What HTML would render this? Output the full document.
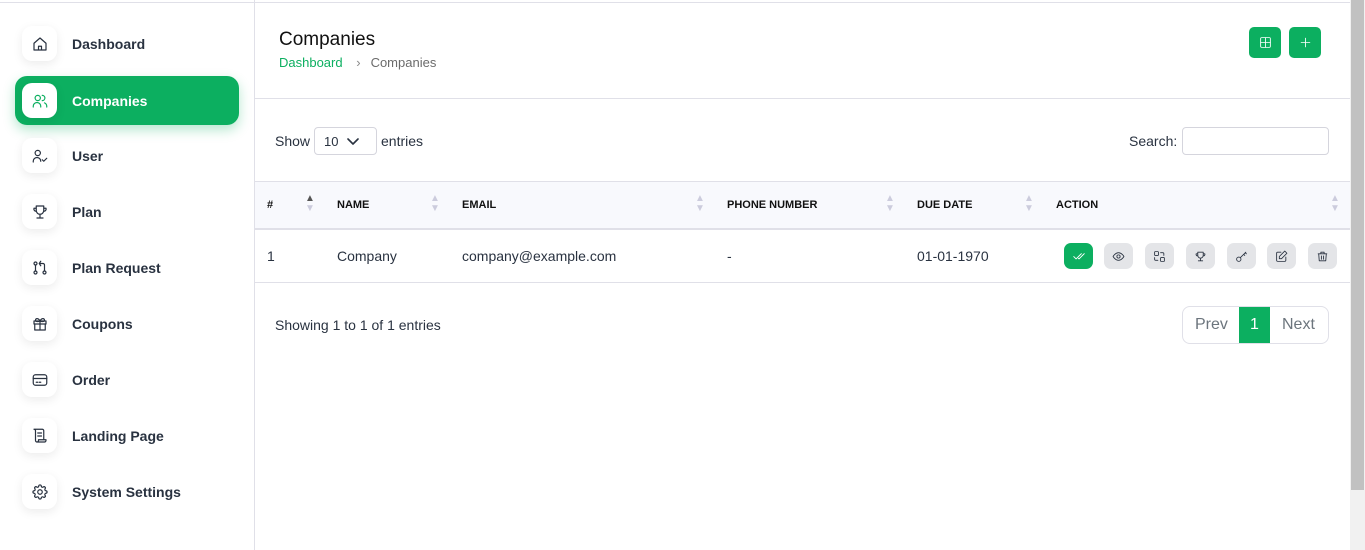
<!DOCTYPE html>
<html><head><style>
*{box-sizing:border-box;margin:0;padding:0}
body{width:1365px;height:550px;overflow:hidden;background:#fff;font-family:"Liberation Sans",sans-serif;position:relative;color:#293240}
.top{position:absolute;left:0;top:0;width:1350px;height:3px;border-bottom:1px solid #e0e0e8}
.side{position:absolute;left:0;top:0;width:255px;height:550px;border-right:1px solid #e0e0e8}
.item{position:absolute;left:15px;width:224px;height:49px;border-radius:12px;display:flex;align-items:center;font-size:14px;font-weight:bold;color:#293240}
.item .ic{width:35px;height:35px;border-radius:10px;background:#fff;box-shadow:0 3px 10px rgba(0,0,0,.08);margin-left:7px;margin-right:15px;display:flex;align-items:center;justify-content:center}
.item.act{background:#0caf60;color:#fff;box-shadow:0 5px 12px rgba(12,175,96,.3)}
svg{fill:none;stroke-width:1.6;stroke-linecap:round;stroke-linejoin:round}
.sb{position:absolute;left:1350px;top:0;width:15px;height:550px;background:#f1f1f1}
.sb div{position:absolute;left:1px;top:0;width:13px;height:490px;background:#c1c1c1}
.abs{position:absolute}
.gbtn{position:absolute;top:27px;width:32px;height:31px;background:#0caf60;border-radius:5px;display:flex;align-items:center;justify-content:center}
.th{position:absolute;top:199px;font-size:11px;font-weight:bold;color:#111}
.arr{position:absolute;top:194px;font-size:10px;line-height:10px;color:#ccd}
.td{position:absolute;top:248px;font-size:14px;color:#293240}
.ab{position:absolute;top:243px;width:29px;height:26px;border-radius:7px;background:#e4e5e8;display:flex;align-items:center;justify-content:center}
</style></head><body>
<div class="top"></div>
<div class="side">
<div class="item" style="top:19px"><div class="ic"><svg width="18" height="18" viewBox="0 0 24 24" stroke="#293240"><path d="M4 11l8-7 8 7v9H4z M10 20v-5h4v5"/></svg></div>Dashboard</div>
<div class="item act" style="top:76px"><div class="ic"><svg width="18" height="18" viewBox="0 0 24 24" stroke="#0caf60"><circle cx="9" cy="8" r="3.5"/><path d="M3 20v-1a5 5 0 0 1 10 0v1M15 4.5a3.5 3.5 0 0 1 0 7M21 20v-1a5 5 0 0 0-3-4.5"/></svg></div>Companies</div>
<div class="item" style="top:131px"><div class="ic"><svg width="18" height="18" viewBox="0 0 24 24" stroke="#293240"><circle cx="9" cy="8" r="3.5"/><path d="M3 20v-1a5 5 0 0 1 10 0M15 17l2 2 4-4"/></svg></div>User</div>
<div class="item" style="top:187px"><div class="ic"><svg width="18" height="18" viewBox="0 0 24 24" stroke="#293240"><path d="M8 20h8M12 15v5M7 4h10v6a5 5 0 0 1-10 0zM7 7H4a3 3 0 0 0 3 4M17 7h3a3 3 0 0 1-3 4"/></svg></div>Plan</div>
<div class="item" style="top:243px"><div class="ic"><svg width="18" height="18" viewBox="0 0 24 24" stroke="#293240"><circle cx="6" cy="18" r="2"/><circle cx="6" cy="6" r="2"/><circle cx="18" cy="18" r="2"/><path d="M6 8v8M11 6h5a2 2 0 0 1 2 2v8M13 3l-2 3 2 3"/></svg></div>Plan Request</div>
<div class="item" style="top:299px"><div class="ic"><svg width="18" height="18" viewBox="0 0 24 24" stroke="#293240"><rect x="4" y="8" width="16" height="4"/><path d="M5 12v8h14v-8M12 8v12M12 8c-2-4-6-4-6-1s6 1 6 1c2-4 6-4 6-1s-6 1-6 1"/></svg></div>Coupons</div>
<div class="item" style="top:355px"><div class="ic"><svg width="18" height="18" viewBox="0 0 24 24" stroke="#293240"><rect x="3" y="5" width="18" height="14" rx="3"/><path d="M3 10h18M7 15h2M11 15h2"/></svg></div>Order</div>
<div class="item" style="top:411px"><div class="ic"><svg width="18" height="18" viewBox="0 0 24 24" stroke="#293240"><path d="M8 20h10a2 2 0 0 0 2-2v-1H10v1a2 2 0 0 1-4 0V5a2 2 0 0 0-2-2h11a2 2 0 0 1 2 2v12M9 8h5M9 12h5"/></svg></div>Landing Page</div>
<div class="item" style="top:467px"><div class="ic"><svg width="18" height="18" viewBox="0 0 24 24" stroke="#293240"><circle cx="12" cy="12" r="3"/><path d="M10.3 4.3a1.7 1.7 0 0 1 3.4 0 1.7 1.7 0 0 0 2.6 1.1 1.7 1.7 0 0 1 2.4 2.4 1.7 1.7 0 0 0 1 2.5 1.7 1.7 0 0 1 0 3.4 1.7 1.7 0 0 0-1 2.6 1.7 1.7 0 0 1-2.4 2.4 1.7 1.7 0 0 0-2.6 1 1.7 1.7 0 0 1-3.4 0 1.7 1.7 0 0 0-2.6-1 1.7 1.7 0 0 1-2.4-2.4 1.7 1.7 0 0 0-1-2.6 1.7 1.7 0 0 1 0-3.4 1.7 1.7 0 0 0 1-2.5 1.7 1.7 0 0 1 2.4-2.4 1.7 1.7 0 0 0 2.6-1.1z"/></svg></div>System Settings</div>
</div>

<div class="abs" style="left:279px;top:29px;font-size:19px;color:#111">Companies</div>
<div class="abs" style="left:279px;top:55px;font-size:13px;color:#0caf60">Dashboard <span style="color:#888;margin:0 10px">›</span><span style="color:#6b6b6b">Companies</span></div>
<div class="gbtn" style="left:1249px"><svg width="13" height="13" viewBox="0 0 24 24" stroke="#fff" stroke-width="2.5"><rect x="3" y="3" width="18" height="18" rx="2"/><path d="M12 3v18M3 12h18"/></svg></div>
<div class="gbtn" style="left:1289px"><svg width="13" height="13" viewBox="0 0 24 24" stroke="#fff" stroke-width="2.5"><path d="M12 4v16M4 12h16"/></svg></div>
<div class="abs" style="left:255px;top:98px;width:1095px;border-top:1px solid #e0e0e8"></div>

<div class="abs" style="left:275px;top:133px;font-size:14px;color:#293240">Show</div>
<div class="abs" style="left:314px;top:127px;width:63px;height:28px;border:1px solid #d5d5dd;border-radius:4px;font-size:13px;padding:6px 0 0 9px">10<svg style="position:absolute;left:32px;top:9px" width="12" height="10" viewBox="0 0 12 8" stroke="#293240" stroke-width="1.8"><path d="M1 1l5 5 5-5"/></svg></div>
<div class="abs" style="left:381px;top:133px;font-size:14px">entries</div>
<div class="abs" style="left:1129px;top:133px;font-size:14px">Search:</div>
<div class="abs" style="left:1182px;top:127px;width:147px;height:28px;border:1px solid #d5d5dd;border-radius:4px"></div>

<div class="abs" style="left:255px;top:181px;width:1095px;height:49px;background:#f8f9fd;border-top:1px solid #e0e0e8;border-bottom:2px solid #e0e0e8"></div>
<div class="th" style="left:267px">#</div><div class="arr" style="left:305px;color:#555">▲<br><span style="color:#ccd">▼</span></div>
<div class="th" style="left:337px">NAME</div><div class="arr" style="left:430px">▲<br>▼</div>
<div class="th" style="left:462px">EMAIL</div><div class="arr" style="left:695px">▲<br>▼</div>
<div class="th" style="left:727px">PHONE NUMBER</div><div class="arr" style="left:885px">▲<br>▼</div>
<div class="th" style="left:917px">DUE DATE</div><div class="arr" style="left:1024px">▲<br>▼</div>
<div class="th" style="left:1056px">ACTION</div><div class="arr" style="left:1330px">▲<br>▼</div>

<div class="td" style="left:267px">1</div>
<div class="td" style="left:337px">Company</div>
<div class="td" style="left:462px">company@example.com</div>
<div class="td" style="left:727px">-</div>
<div class="td" style="left:917px">01-01-1970</div>
<div class="ab" style="left:1064px;background:#0caf60"><svg width="14" height="14" viewBox="0 0 24 24" stroke="#fff" stroke-width="2.5"><path d="M3 13l4 4 9-9M11 16l1 1 9-9"/></svg></div>
<div class="ab" style="left:1104px"><svg width="13" height="13" viewBox="0 0 24 24" stroke="#293240" stroke-width="2"><path d="M2 12s4-7 10-7 10 7 10 7-4 7-10 7S2 12 2 12z"/><circle cx="12" cy="12" r="3"/></svg></div>
<div class="ab" style="left:1145px"><svg width="13" height="13" viewBox="0 0 24 24" stroke="#293240" stroke-width="2"><rect x="3" y="3" width="7" height="7" rx="1"/><rect x="14" y="14" width="7" height="7" rx="1"/><path d="M14 5h4a2 2 0 0 1 2 2v3M3 14v3a2 2 0 0 0 2 2h4"/></svg></div>
<div class="ab" style="left:1186px"><svg width="13" height="13" viewBox="0 0 24 24" stroke="#293240" stroke-width="2"><path d="M8 20h8M12 15v5M7 4h10v6a5 5 0 0 1-10 0zM7 7H4a3 3 0 0 0 3 4M17 7h3a3 3 0 0 1-3 4"/></svg></div>
<div class="ab" style="left:1227px"><svg width="13" height="13" viewBox="0 0 24 24" stroke="#293240" stroke-width="2"><circle cx="7" cy="17" r="4"/><path d="M10 14l10-10M16 8l2 2M19 5l2 2"/></svg></div>
<div class="ab" style="left:1267px"><svg width="13" height="13" viewBox="0 0 24 24" stroke="#293240" stroke-width="2"><path d="M11 4H5a2 2 0 0 0-2 2v13a2 2 0 0 0 2 2h13a2 2 0 0 0 2-2v-6M18 2l4 4-10 10H8v-4z"/></svg></div>
<div class="ab" style="left:1308px"><svg width="13" height="13" viewBox="0 0 24 24" stroke="#293240" stroke-width="2"><path d="M4 7h16M10 11v6M14 11v6M5 7l1 13h12l1-13M9 7V4h6v3"/></svg></div>
<div class="abs" style="left:255px;top:282px;width:1095px;border-top:1px solid #e0e0e8"></div>

<div class="abs" style="left:275px;top:317px;font-size:14px">Showing 1 to 1 of 1 entries</div>
<div class="abs" style="left:1182px;top:306px;width:147px;height:38px;border:1px solid #e0e0e8;border-radius:8px;overflow:hidden;font-size:16px;color:#6c757d">
<span class="abs" style="left:12px;top:9px">Prev</span>
<span class="abs" style="left:56px;top:0;width:31px;height:38px;background:#0caf60;color:#fff;text-align:center;padding-top:9px">1</span>
<span class="abs" style="left:99px;top:9px">Next</span>
</div>
<div class="sb"><div></div></div>
</body></html>
